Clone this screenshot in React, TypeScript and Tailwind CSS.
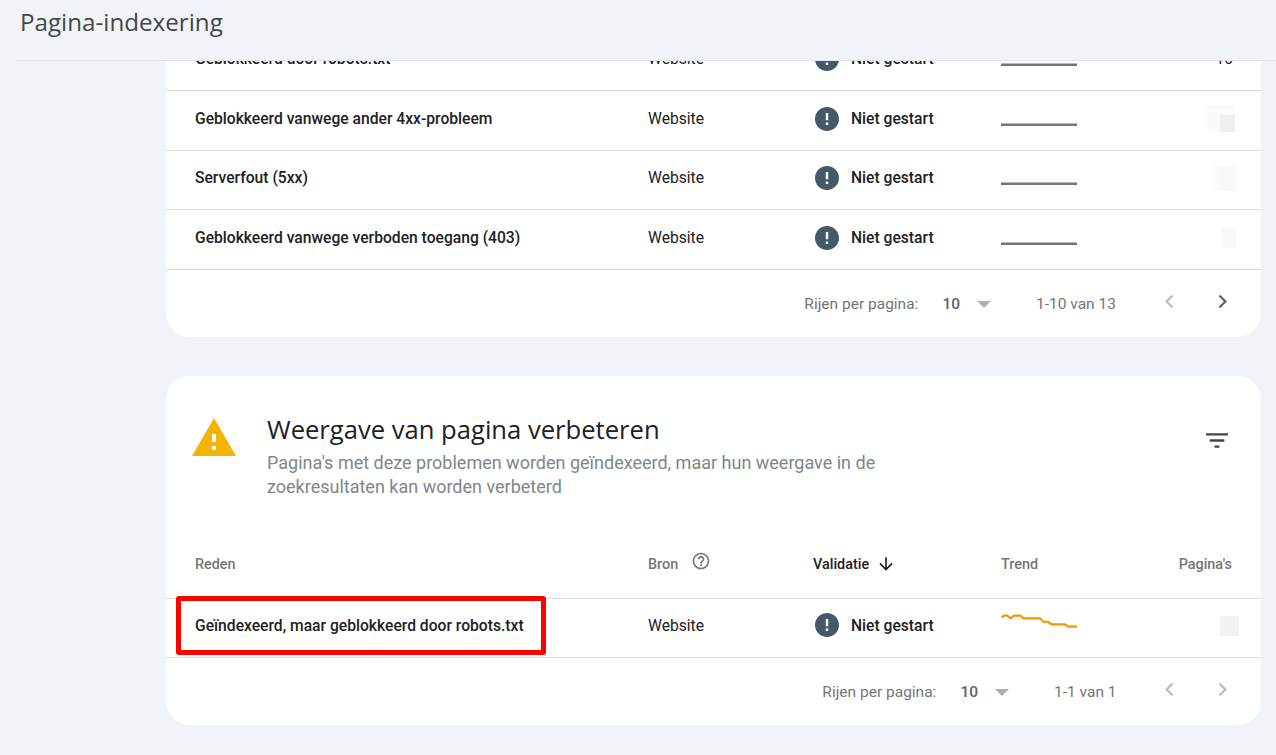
import React from "react";

const ErrorIcon = () => (
  <svg width="24" height="24" viewBox="2 2 20 20" className="shrink-0">
    <path fill="#455a68" d="M12 2C6.48 2 2 6.48 2 12s4.48 10 10 10 10-4.48 10-10S17.52 2 12 2zm1 15h-2v-2h2v2zm0-4h-2V7h2v6z" />
  </svg>
);

const Chevron = ({ dir, color }: { dir: "l" | "r"; color: string }) => (
  <svg width="27" height="27" viewBox="0 0 24 24">
    <path fill={color} d={dir === "l" ? "M15.41 7.41 14 6l-6 6 6 6 1.41-1.41L10.83 12z" : "M8.59 16.59 10 18l6-6-6-6-1.41 1.41L13.17 12z"} />
  </svg>
);

const GreyLine = () => (
  <svg width="76" height="24" viewBox="0 0 76 24" className="block">
    <rect x="0" y="16.5" width="76" height="2.5" fill="#757575" />
  </svg>
);

const OrangeLine = () => (
  <svg width="76" height="24" viewBox="0 0 76 24" className="block">
    <polyline
      fill="none"
      stroke="#f29900"
      strokeWidth="2.2"
      points="0.5,3.7 3,1.7 6.3,1.7 9.7,4.3 13,1.7 19.7,1.7 22.3,4.3 39,4.3 42.3,7.7 47.3,8 50.7,10.3 64,10.3 67.3,12.7 76,12.7"
    />
  </svg>
);

const Row = ({
  name,
  pages,
  h = "h-[59.6px]",
  tp = "pb-[3px]",
}: {
  name: string;
  pages: React.ReactNode;
  h?: string;
  tp?: string;
}) => (
  <div className={`grid grid-cols-[453px_165px_188px_1fr] items-center pl-[29px] pr-[29px] border-b border-[#dadce0] ${h}`}>
    <div className={`text-[15.65px] font-medium text-[#202124] whitespace-nowrap ${tp}`}>{name}</div>
    <div className={`text-[15.65px] text-[#202124] ${tp}`}>Website</div>
    <div className={`flex items-center gap-[12px] pl-[2px] ${tp}`}>
      <ErrorIcon />
      <span className="text-[15.65px] font-medium text-[#202124]">Niet gestart</span>
    </div>
    <div className="flex items-center justify-between">
      <div className="pb-[3px]">{name.startsWith("Geïndexeerd") ? <OrangeLine /> : <GreyLine />}</div>
      <div className="pb-[3px]">{pages}</div>
    </div>
  </div>
);

const Footer = ({ range, nextColor, rangeW }: { range: string; nextColor: string; rangeW: string }) => (
  <div className="flex items-center justify-end h-[67px] pr-[25.5px] pt-[2px] text-[15.5px] text-[#757575]">
    <span>Rijen per pagina:</span>
    <span className="ml-[24px] font-medium text-[#5f6368]">10</span>
    <svg width="14" height="7" viewBox="0 0 14 7" className="ml-[17px]"><path d="M0 0h14L7 7z" fill="#b0b0b0" /></svg>
    <span className={`ml-[45px] whitespace-nowrap ${rangeW}`}>{range}</span>
    <div className="ml-[38.5px] flex gap-[26px] pb-[6px]">
      <Chevron dir="l" color="#bdbdbd" />
      <Chevron dir="r" color={nextColor} />
    </div>
  </div>
);

const Block1 = () => (
  <div className="flex mr-[-3px]">
    <div className="w-[13px] h-[27px] bg-[#fbfbfb]" />
    <div className="w-[15px] h-[27px] flex flex-col bg-[#fafbfb]">
      <div className="h-[10px]" />
      <div className="flex-1 bg-[#eff1f1]" />
    </div>
  </div>
);

const Block2 = () => (
  <div className="flex mr-[-5px]">
    <div className="w-[7px] h-[25px] bg-[#fdfbf9]" />
    <div className="w-[18px] h-[25px] bg-[#f7f9fb]" />
  </div>
);

export default function App() {
  return (
    <div className="h-[755px] w-[1276px] overflow-hidden flex flex-col bg-[#f0f4f9] [font-family:Roboto,sans-serif]">
      <header className="h-[61px] shrink-0 pl-[16px]">
        <div className="h-[61px] border-b border-[#e0e3e7] flex items-center pl-[4px] pb-[16px]">
          <h1 className="text-[24.2px] text-[#444746] [font-family:'Open_Sans',sans-serif] leading-none">Pagina-indexering</h1>
        </div>
      </header>

      <main className="flex-1 overflow-hidden pl-[166px] pr-[15px]">
        <section className="-mt-[30px] bg-white rounded-b-[24px]">
          <Row
            name="Geblokkeerd door robots.txt"
            h="h-[60px]"
            pages={<span className="text-[15.65px] text-[#202124] mr-[-1px]">10</span>}
          />
          <Row name="Geblokkeerd vanwege ander 4xx-probleem" pages={<Block1 />} />
          <Row name="Serverfout (5xx)" tp="pb-[4px]" pages={<Block2 />} />
          <Row name="Geblokkeerd vanwege verboden toegang (403)" pages={<div className="w-[15px] h-[20px] bg-[#f8f9f9] mr-[-4px]" />} />
          <Footer range="1-10 van 13" nextColor="#5f6368" rangeW="w-[81px]" />
        </section>

        <section className="mt-[39px] bg-white rounded-[24px]">
          <div className="flex h-[146px] pl-[26px] pr-[33px] pt-[37px]">
            <svg width="44" height="38" viewBox="1 2 22 19" className="mt-[5px] shrink-0">
              <path fill="#f4b400" d="M1 21h22L12 2 1 21zm12-3h-2v-2h2v2zm0-4h-2v-4h2v4z" />
            </svg>
            <div className="ml-[31px] flex-1">
              <h2 className="text-[25.6px] leading-[34px] text-[#202124] [font-family:'Open_Sans',sans-serif]">Weergave van pagina verbeteren</h2>
              <p className="text-[18px] leading-[24.5px] text-[#80868b] w-[640px] mt-[4px]">
                Pagina's met deze problemen worden geïndexeerd, maar hun weergave in de zoekresultaten kan worden verbeterd
              </p>
            </div>
            <svg width="22" height="15" viewBox="3 6 18 12" className="mt-[20px] shrink-0">
              <path fill="#444746" d="M10 18h4v-2h-4v2zM3 6v2h18V6H3zm3 7h12v-2H6v2z" />
            </svg>
          </div>

          <div className="grid grid-cols-[453px_165px_188px_1fr] items-center pl-[29px] pr-[29px] h-[77px] border-b border-[#dadce0] text-[14.4px] font-medium text-[#757575] pt-[10px]">
            <div>Reden</div>
            <div className="flex items-center gap-[13px]">
              Bron
              <svg width="20" height="20" viewBox="0 0 24 24" className="mb-[8px]">
                <path fill="#757575" d="M11 18h2v-2h-2v2zm1-16C6.48 2 2 6.48 2 12s4.48 10 10 10 10-4.48 10-10S17.52 2 12 2zm0 18c-4.41 0-8-3.59-8-8s3.59-8 8-8 8 3.59 8 8-3.59 8-8 8zm0-14c-2.21 0-4 1.79-4 4h2c0-1.1.9-2 2-2s2 .9 2 2c0 2-3 1.75-3 5h2c0-2.25 3-2.5 3-5 0-2.21-1.79-4-4-4z" />
              </svg>
            </div>
            <div className="flex items-center gap-[7px] text-[#202124]">
              Validatie
              <svg width="20" height="20" viewBox="0 0 24 24" className="mb-[2px]">
                <path fill="#202124" d="M20 12l-1.41-1.41L13 16.17V4h-2v12.17l-5.58-5.59L4 12l8 8 8-8z" />
              </svg>
            </div>
            <div className="flex justify-between">
              <span>Trend</span>
              <span>Pagina's</span>
            </div>
          </div>

          <div className="relative">
            <Row name="Geïndexeerd, maar geblokkeerd door robots.txt" h="h-[59px]" tp="pb-[5px]" pages={<div className="w-[19px] h-[20px] bg-[#f1f2f2] mr-[-7px]" />} />
            <div className="absolute left-[10px] -top-[3px] w-[370px] h-[59px] border-[5px] border-[#ff0000] rounded-[3px]" />
          </div>
          <Footer range="1-1 van 1" nextColor="#bdbdbd" rangeW="w-[63px]" />
        </section>
      </main>
    </div>
  );
}
